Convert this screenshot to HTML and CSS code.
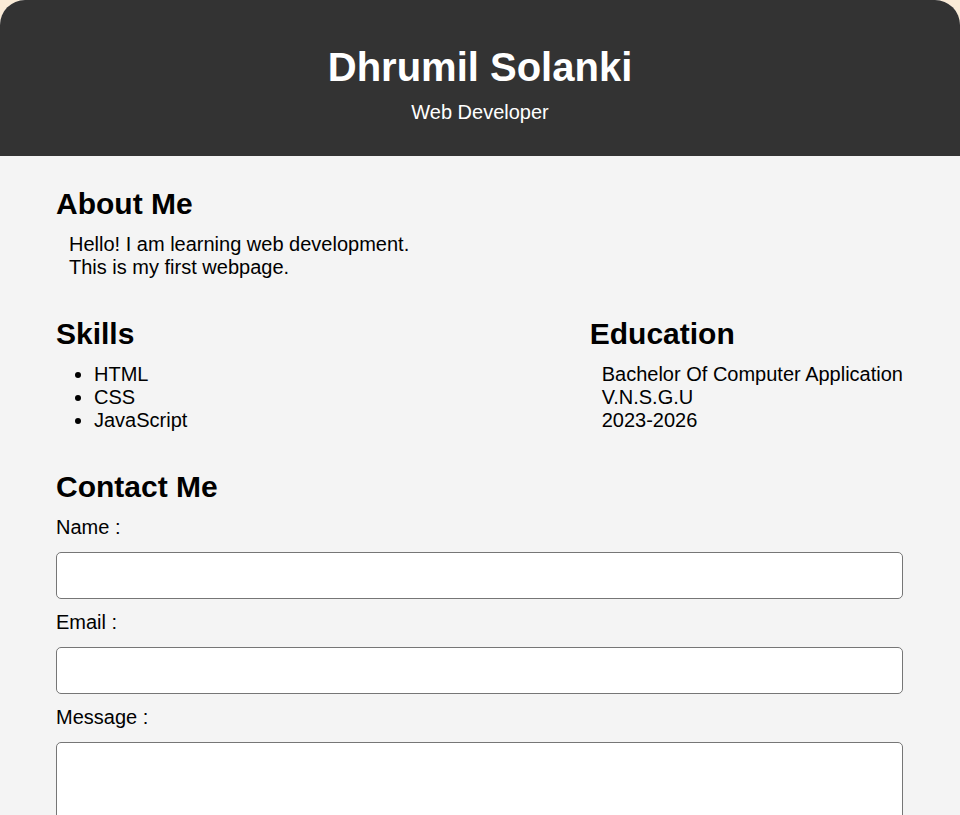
FILE: index.html
```html
<!DOCTYPE html>
<html lang="en">
<head>
<meta charset="utf-8">
<title>Dhrumil Solanki</title>
<link rel="stylesheet" href="styles.css">
</head>
<body>
<div class="page">
  <header class="header">
    <h1>Dhrumil Solanki</h1>
    <p>Web Developer</p>
  </header>
  <main class="main">
    <section class="about">
      <h2>About Me</h2>
      <p class="indent">Hello! I am learning web development.<br>This is my first webpage.</p>
    </section>
    <div class="row">
      <section class="skills">
        <h2>Skills</h2>
        <ul>
          <li>HTML</li>
          <li>CSS</li>
          <li>JavaScript</li>
        </ul>
      </section>
      <section class="education">
        <h2>Education</h2>
        <p class="indent-sm">Bachelor Of Computer Application<br>V.N.S.G.U<br>2023-2026</p>
      </section>
    </div>
    <section class="contact">
      <h2>Contact Me</h2>
      <form class="form">
        <label for="name">Name :</label>
        <input id="name" type="text">
        <label for="email">Email :</label>
        <input id="email" type="email">
        <label for="msg">Message :</label>
        <textarea id="msg"></textarea>
      </form>
    </section>
  </main>
</div>
</body>
</html>
```
FILE: styles.css
```css
html, body {
  margin: 0;
  padding: 0;
}
body {
  background: #faebd7;
  font-family: "Liberation Sans", Arial, sans-serif;
  font-size: 20px;
  color: #000;
}
.page {
  background: #f4f4f4;
  border-radius: 25px;
  overflow: hidden;
  min-height: 1100px;
}
.header {
  background: #333;
  color: #fff;
  text-align: center;
  padding: 44px 0 32px;
}
.header h1 {
  margin: 0 0 11px;
  font-size: 40px;
  line-height: 46px;
}
.header p {
  margin: 0;
  line-height: 23px;
}
.main {
  padding: 31px 57px 40px 56px;
  display: flex;
  flex-direction: column;
  gap: 38px;
}
h2 {
  font-size: 30px;
  line-height: 34.5px;
  margin: 0 0 12px;
}
p, ul {
  margin: 0;
  line-height: 23px;
}
.about h2 {
  margin-bottom: 11px;
}
.indent {
  padding-left: 13px;
}
.indent-sm {
  padding-left: 12px;
}
.row {
  display: flex;
  justify-content: space-between;
}
.skills ul {
  padding-left: 38px;
}
.contact h2 {
  margin-bottom: 11px;
}
.form {
  display: flex;
  flex-direction: column;
}
.form label {
  line-height: 23px;
}
.form input, .form textarea {
  box-sizing: border-box;
  width: 100%;
  margin: 13px 0 12px;
  border: 1px solid #767676;
  border-radius: 5px;
  background: #fff;
  font: inherit;
  padding: 10px;
}
.form input {
  height: 47px;
}
.form textarea {
  height: 120px;
  resize: vertical;
}
```
